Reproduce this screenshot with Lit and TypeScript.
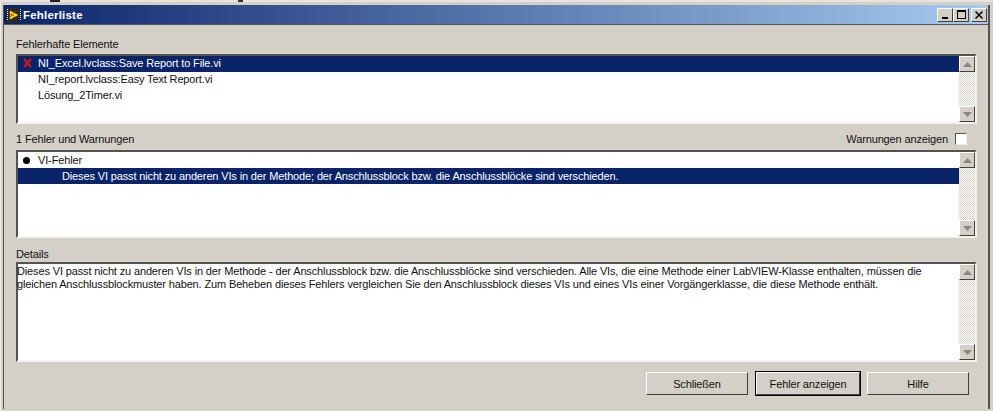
import { LitElement, html, css, svg } from "lit";
import { customElement } from "lit/decorators.js";

const upArrow = svg`<svg class="arr" width="9" height="5" viewBox="0 0 9 5"><path d="M4.5 0 L9 5 H0 Z" fill="#8a8780"/></svg>`;
const downArrow = svg`<svg class="arr" width="9" height="5" viewBox="0 0 9 5"><path d="M0 0 H9 L4.5 5 Z" fill="#8a8780"/></svg>`;

@customElement("app-root")
export class AppRoot extends LitElement {
  static styles = css`
    :host { display: block; width: 993px; height: 411px; overflow: hidden; background: #d4d0c8;
      font-family: "Liberation Sans", sans-serif; font-size: 11px; color: #111; letter-spacing: -0.14px; }
    .strip { height: 2px; background: linear-gradient(90deg, #e8e4dc 0 5%, #222 5% 6%, #e8e4dc 6% 24%, #333 24% 24.5%, #e8e4dc 24.5% 100%); }
    .win { height: 409px; box-sizing: border-box; background: #d4d0c8; border-left: 1px solid #eee; padding: 1px 0 0 0; display: flex; flex-direction: column; }
    .frame { flex: 1; margin: 2px 3px 2px 2px; border-left: 1px solid #55534e; border-right: 2px solid #55534e; display: flex; flex-direction: column; min-height: 0; }
    .title { height: 19px; background: linear-gradient(90deg, #0a246a, #a6caf0); display: flex; align-items: center; padding: 0 1px 0 3px; flex: none; border-bottom: 1px solid #555; }
    .title b { color: #fff; font-size: 11.5px; font-weight: 700; letter-spacing: 0.2px; flex: 1; margin-left: 2px; }
    .wb { width: 16px; height: 14px; box-sizing: border-box; background: #d4d0c8; border: 1px solid; border-color: #fff #404040 #404040 #fff; display: flex; align-items: center; justify-content: center; }
    .wb.close { margin-left: 2px; }
    .wb.min i { width: 6px; height: 2px; background: #000; margin-top: 6px; display: block; }
    .wb.max i { width: 9px; height: 9px; box-sizing: border-box; border: 1px solid #000; border-top-width: 2px; display: block; }
    .body { flex: 1; padding: 0 10px 0 12px; display: flex; flex-direction: column; min-height: 0; }
    .lbl { flex: none; display: flex; align-items: center; justify-content: space-between; }
    .l1 { height: 29px; padding-top: 8px; box-sizing: border-box; }
    .l2 { height: 26px; padding-top: 4px; box-sizing: border-box; }
    .l3 { height: 24px; padding-top: 8px; box-sizing: border-box; }
    .lr { display: flex; align-items: center; gap: 7px; padding-right: 11px; }
    .cb { width: 12px; height: 12px; box-sizing: border-box; background: #fff; border: 1px solid; border-color: #555 #eee #eee #555; }
    .list { flex: none; width: 961px; background: #fff; box-sizing: border-box; border: 2px solid; border-color: #55534e #f4f2ec #f4f2ec #55534e; display: flex; }
    .h1 { height: 70px; } .h2 { height: 88px; } .h3 { height: 100px; }
    .h1 .row { padding-bottom: 2px; box-sizing: border-box; }
    .rows { flex: 1; min-width: 0; }
    .row { height: 16px; display: flex; align-items: center; white-space: nowrap; }
    .row.sel { background: #0a246a; color: #fff; }
    .row .ic { width: 16px; flex: none; margin-left: 4px; display: flex; align-items: center; padding-left: 1px; box-sizing: border-box; }
    .row .ind { width: 44px; flex: none; }
    .dot { width: 7px; height: 7px; border-radius: 50%; background: #000; margin-top: 1px; }
    .text { flex: 1; padding: 1px 0 0 0; line-height: 13px; white-space: nowrap; min-width: 0; margin-left: -1px; }
    .sb { width: 16px; flex: none; display: flex; flex-direction: column; justify-content: space-between;
      background: repeating-conic-gradient(#d4d0c8 0 25%, #fff 0 50%) 0 0 / 2px 2px; }
    .sb span { height: 16px; box-sizing: border-box; background: #d4d0c8; border: 1px solid; border-color: #fff #404040 #404040 #fff; display: flex; align-items: center; justify-content: center; }
    .btns { flex: 1; display: flex; justify-content: flex-end; padding: 10px 9px 0 0; gap: 8px; }
    .btn { width: 102px; height: 23px; box-sizing: border-box; background: #d4d0c8; border: 1px solid; border-color: #fff #404040 #404040 #fff; display: flex; align-items: center; justify-content: center; }
    .btn.def { width: 104px; outline: 1px solid #000; margin-right: -1px; }
    .arr { display: block; }
  `;

  private scroll() {
    return html`<div class="sb"><span>${upArrow}</span><span>${downArrow}</span></div>`;
  }

  render() {
    return html`
      <div class="strip"></div>
      <div class="win">
        <div class="frame">
          <div class="title">
            <svg width="14" height="14" viewBox="0 0 14 14">
              <rect width="14" height="14" fill="#2a2a2a"/>
              <path d="M0.5 1 v12 M13.5 1 v12" stroke="#eee" stroke-width="1" stroke-dasharray="1 1"/>
              <path d="M2.5 2 L12 7 L2.5 12 Z" fill="#f6dc20" stroke="#111" stroke-width=".5"/>
              <path d="M0 4 L7 8 M3 9 L9 3" stroke="#c03020" stroke-width=".8"/>
            </svg>
            <b>Fehlerliste</b>
            <div class="wb min"><i></i></div>
            <div class="wb max"><i></i></div>
            <div class="wb close">
              <svg width="8" height="8" viewBox="0 0 8 8"><path d="M0.5 0.5 L7.5 7.5 M7.5 0.5 L0.5 7.5" stroke="#000" stroke-width="1.5"/></svg>
            </div>
          </div>
          <div class="body">
            <div class="lbl l1">Fehlerhafte Elemente</div>
            <div class="list h1">
              <div class="rows">
                <div class="row sel"><span class="ic"><svg width="9" height="10" viewBox="0 0 9 10"><path d="M1 1 L8 9 M8 1 L1 9" stroke="#c81818" stroke-width="2.4"/></svg></span><span>NI_Excel.lvclass:Save Report to File.vi</span></div>
                <div class="row"><span class="ic"></span><span>NI_report.lvclass:Easy Text Report.vi</span></div>
                <div class="row"><span class="ic"></span><span>Lösung_2Timer.vi</span></div>
              </div>
              ${this.scroll()}
            </div>
            <div class="lbl l2"><span>1 Fehler und Warnungen</span><span class="lr">Warnungen anzeigen <i class="cb"></i></span></div>
            <div class="list h2">
              <div class="rows">
                <div class="row"><span class="ic"><i class="dot"></i></span><span>VI-Fehler</span></div>
                <div class="row sel"><span class="ind"></span><span>Dieses VI passt nicht zu anderen VIs in der Methode; der Anschlussblock bzw. die Anschlussblöcke sind verschieden.</span></div>
              </div>
              ${this.scroll()}
            </div>
            <div class="lbl l3">Details</div>
            <div class="list h3">
              <div class="text">Dieses VI passt nicht zu anderen VIs in der Methode - der Anschlussblock bzw. die Anschlussblöcke sind verschieden. Alle VIs, die eine Methode einer LabVIEW-Klasse enthalten, müssen die<br>gleichen Anschlussblockmuster haben. Zum Beheben dieses Fehlers vergleichen Sie den Anschlussblock dieses VIs und eines VIs einer Vorgängerklasse, die diese Methode enthält.</div>
              ${this.scroll()}
            </div>
            <div class="btns">
              <div class="btn">Schließen</div>
              <div class="btn def">Fehler anzeigen</div>
              <div class="btn">Hilfe</div>
            </div>
          </div>
        </div>
      </div>
    `;
  }
}
